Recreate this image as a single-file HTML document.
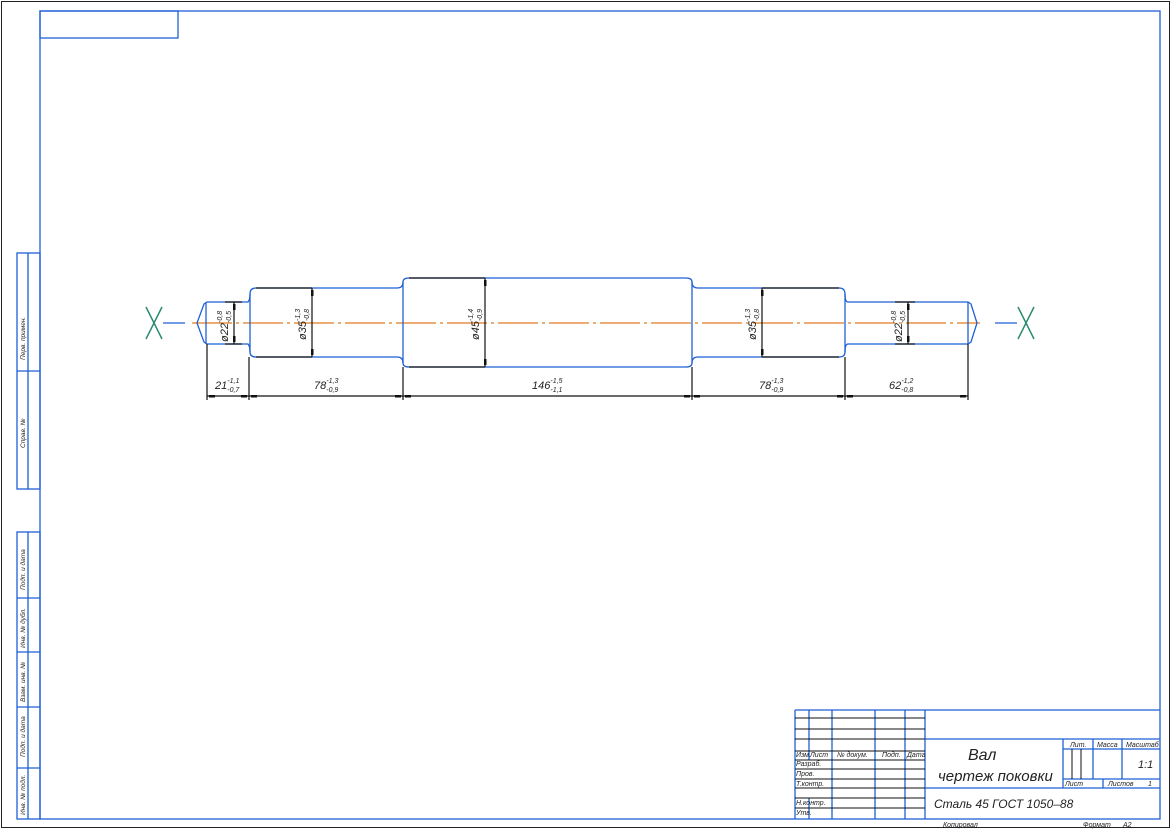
<!DOCTYPE html>
<html><head><meta charset="utf-8"><style>
html,body{margin:0;padding:0;background:#fff;width:1172px;height:830px;overflow:hidden}
svg{display:block}
text{font-family:"Liberation Sans","DejaVu Sans",sans-serif;font-style:italic;fill:#222}
</style></head><body>
<svg width="1172" height="830" viewBox="0 0 1172 830" xmlns="http://www.w3.org/2000/svg">
<rect x="1.5" y="1.5" width="1168" height="826" fill="none" stroke="#222" stroke-width="1"/>
<g fill="none" stroke="#1f5fd6" stroke-width="1.3">
<rect x="40" y="11" width="1120" height="808"/>
<rect x="40" y="11" width="138" height="27"/>
<rect x="17" y="253" width="23" height="236"/>
<line x1="28" y1="253" x2="28" y2="489"/>
<line x1="17" y1="371" x2="40" y2="371"/>
<rect x="17" y="532" width="23" height="287"/>
<line x1="28" y1="532" x2="28" y2="819"/>
<line x1="17" y1="598" x2="40" y2="598"/>
<line x1="17" y1="652" x2="40" y2="652"/>
<line x1="17" y1="707" x2="40" y2="707"/>
<line x1="17" y1="768" x2="40" y2="768"/>
<line x1="795" y1="710" x2="1160" y2="710"/>
<line x1="795" y1="710" x2="795" y2="819"/>
<line x1="809" y1="710" x2="809" y2="760"/>
<line x1="809" y1="798" x2="809" y2="819"/>
<line x1="832" y1="710" x2="832" y2="819"/>
<line x1="875" y1="710" x2="875" y2="819"/>
<line x1="905" y1="710" x2="905" y2="819"/>
<line x1="925" y1="710" x2="925" y2="819"/>
<line x1="925" y1="739" x2="1160" y2="739"/>
<line x1="925" y1="788" x2="1160" y2="788"/>
<line x1="1063" y1="739" x2="1063" y2="788"/>
<line x1="1093" y1="739" x2="1093" y2="779"/>
<line x1="1122" y1="739" x2="1122" y2="779"/>
<line x1="1063" y1="749" x2="1160" y2="749"/>
<line x1="1063" y1="779" x2="1160" y2="779"/>
<line x1="1103" y1="779" x2="1103" y2="788"/>
</g>
<g stroke="#111" stroke-width="1">
<line x1="795" y1="718" x2="925" y2="718"/>
<line x1="795" y1="729" x2="925" y2="729"/>
<line x1="795" y1="739" x2="925" y2="739"/>
<line x1="795" y1="751" x2="925" y2="751"/>
<line x1="795" y1="760" x2="925" y2="760"/>
<line x1="795" y1="769" x2="925" y2="769"/>
<line x1="795" y1="779" x2="925" y2="779"/>
<line x1="795" y1="788" x2="925" y2="788"/>
<line x1="795" y1="798" x2="925" y2="798"/>
<line x1="795" y1="808" x2="925" y2="808"/>
<line x1="1072" y1="749" x2="1072" y2="779"/>
<line x1="1081" y1="749" x2="1081" y2="779"/>
</g>
<g font-size="7">
<text x="796" y="757">Изм.</text><text x="810" y="757">Лист</text><text x="837" y="757">№ докум.</text><text x="882" y="757">Подп.</text><text x="907" y="757">Дата</text>
<text x="796" y="766">Разраб.</text><text x="796" y="776">Пров.</text><text x="796" y="786">Т.контр.</text>
<text x="796" y="805">Н.контр.</text><text x="796" y="815">Утв.</text>
<text x="1070" y="747">Лит.</text><text x="1097" y="747">Масса</text><text x="1126" y="747">Масштаб</text>
<text x="1065" y="786">Лист</text><text x="1108" y="786">Листов</text><text x="1148" y="786">1</text>
<text x="943" y="827">Копировал</text><text x="1083" y="827">Формат</text><text x="1123" y="827">А2</text>
</g>
<text x="1138" y="768" font-size="11">1:1</text>
<text x="968" y="760" font-size="16">Вал</text>
<text x="938" y="781" font-size="15">чертеж поковки</text>
<text x="934" y="808" font-size="12">Сталь 45 ГОСТ 1050–88</text>
<g font-size="6.5">
<text transform="translate(25,360) rotate(-90)">Перв. примен.</text>
<text transform="translate(25,448) rotate(-90)">Справ. №</text>
<text transform="translate(25,590) rotate(-90)">Подп. и дата</text>
<text transform="translate(25,648) rotate(-90)">Инв. № дубл.</text>
<text transform="translate(25,702) rotate(-90)">Взам. инв. №</text>
<text transform="translate(25,757) rotate(-90)">Подп. и дата</text>
<text transform="translate(25,815) rotate(-90)">Инв. № подл.</text>
</g>
<line x1="192" y1="323" x2="980" y2="323" stroke="#e07a20" stroke-width="1.2" stroke-dasharray="40,4,3,4"/>
<g stroke="#2a8a70" stroke-width="1.5">
<line x1="146" y1="307" x2="162" y2="339"/><line x1="162" y1="307" x2="146" y2="339"/>
<line x1="1018" y1="307" x2="1034" y2="339"/><line x1="1034" y1="307" x2="1018" y2="339"/>
</g>
<g stroke="#1f5fd6" stroke-width="1.2"><line x1="163" y1="323" x2="185" y2="323"/><line x1="995" y1="323" x2="1017" y2="323"/></g>
<g fill="none" stroke="#1f5fd6" stroke-width="1.3">
<path d="M207 302 L248 302 Q250 300 250 294 Q250 288 256 288 L397 288 Q403 288 403 282 Q403 278 409 278 L686 278 Q692 278 692 282 Q692 288 698 288 L839 288 Q845 288 845 294 Q845 302 848 302 L968 302 L971 304 L977 323 L971 342 L968 344 L848 344 Q845 344 845 352 Q845 357 839 357 L698 357 Q692 357 692 363 Q692 367 686 367 L409 367 Q403 367 403 363 Q403 357 397 357 L256 357 Q250 357 250 352 Q250 346 248 344 L207 344 L204 342 L197 323 L204 304 Z"/>
<line x1="403" y1="282" x2="403" y2="363"/><line x1="692" y1="282" x2="692" y2="363"/>
<line x1="250" y1="294" x2="250" y2="352"/><line x1="845" y1="294" x2="845" y2="352"/>
<line x1="206" y1="302" x2="206" y2="344"/><line x1="968" y1="302" x2="968" y2="344"/>
</g>
<g stroke="#111" stroke-width="1.2" fill="none">
<line x1="256" y1="288" x2="312" y2="288"/><line x1="256" y1="357" x2="312" y2="357"/>
<line x1="409" y1="278" x2="485" y2="278"/><line x1="409" y1="367" x2="485" y2="367"/>
<line x1="762" y1="288" x2="839" y2="288"/><line x1="762" y1="357" x2="839" y2="357"/>
<line x1="225" y1="302" x2="242" y2="302"/><line x1="225" y1="344" x2="242" y2="344"/>
<line x1="895" y1="302" x2="915" y2="302"/><line x1="895" y1="344" x2="915" y2="344"/>
<line x1="234" y1="302" x2="234" y2="344"/><line x1="312" y1="288" x2="312" y2="357"/>
<line x1="485" y1="278" x2="485" y2="367"/><line x1="762" y1="288" x2="762" y2="357"/>
<line x1="908" y1="302" x2="908" y2="344"/>
<line x1="207" y1="344" x2="207" y2="400"/><line x1="249" y1="357" x2="249" y2="400"/>
<line x1="403" y1="367" x2="403" y2="400"/><line x1="692" y1="367" x2="692" y2="400"/>
<line x1="845" y1="357" x2="845" y2="400"/><line x1="968" y1="344" x2="968" y2="400"/>
<line x1="207" y1="396" x2="968" y2="396"/>
</g>
<g fill="#111">
<rect x="209" y="395" width="6" height="2.5"/><rect x="241" y="395" width="6" height="2.5"/>
<rect x="251" y="395" width="6" height="2.5"/><rect x="395" y="395" width="6" height="2.5"/>
<rect x="405" y="395" width="6" height="2.5"/><rect x="684" y="395" width="6" height="2.5"/>
<rect x="694" y="395" width="6" height="2.5"/><rect x="837" y="395" width="6" height="2.5"/>
<rect x="847" y="395" width="6" height="2.5"/><rect x="960" y="395" width="6" height="2.5"/>
<rect x="233" y="304" width="2.5" height="6"/><rect x="233" y="336" width="2.5" height="6"/>
<rect x="311" y="290" width="2.5" height="6"/><rect x="311" y="349" width="2.5" height="6"/>
<rect x="484" y="280" width="2.5" height="6"/><rect x="484" y="359" width="2.5" height="6"/>
<rect x="761" y="290" width="2.5" height="6"/><rect x="761" y="349" width="2.5" height="6"/>
<rect x="907" y="304" width="2.5" height="6"/><rect x="907" y="336" width="2.5" height="6"/>
</g>
<g font-size="11">
<text x="215" y="389">21<tspan font-size="7" dy="3">-0,7</tspan><tspan font-size="7" dx="-12" dy="-9">-1,1</tspan></text>
<text x="314" y="389">78<tspan font-size="7" dy="3">-0,9</tspan><tspan font-size="7" dx="-12" dy="-9">-1,3</tspan></text>
<text x="532" y="389">146<tspan font-size="7" dy="3">-1,1</tspan><tspan font-size="7" dx="-12" dy="-9">-1,5</tspan></text>
<text x="759" y="389">78<tspan font-size="7" dy="3">-0,9</tspan><tspan font-size="7" dx="-12" dy="-9">-1,3</tspan></text>
<text x="889" y="389">62<tspan font-size="7" dy="3">-0,8</tspan><tspan font-size="7" dx="-12" dy="-9">-1,2</tspan></text>
<text transform="translate(228,342) rotate(-90)">ø22<tspan font-size="7" dy="3">-0,5</tspan><tspan font-size="7" dx="-12" dy="-9">-0,8</tspan></text>
<text transform="translate(306,340) rotate(-90)">ø35<tspan font-size="7" dy="3">-0,8</tspan><tspan font-size="7" dx="-12" dy="-9">-1,3</tspan></text>
<text transform="translate(479,340) rotate(-90)">ø45<tspan font-size="7" dy="3">-0,9</tspan><tspan font-size="7" dx="-12" dy="-9">-1,4</tspan></text>
<text transform="translate(756,340) rotate(-90)">ø35<tspan font-size="7" dy="3">-0,8</tspan><tspan font-size="7" dx="-12" dy="-9">-1,3</tspan></text>
<text transform="translate(902,342) rotate(-90)">ø22<tspan font-size="7" dy="3">-0,5</tspan><tspan font-size="7" dx="-12" dy="-9">-0,8</tspan></text>
</g>
</svg>
</body></html>
